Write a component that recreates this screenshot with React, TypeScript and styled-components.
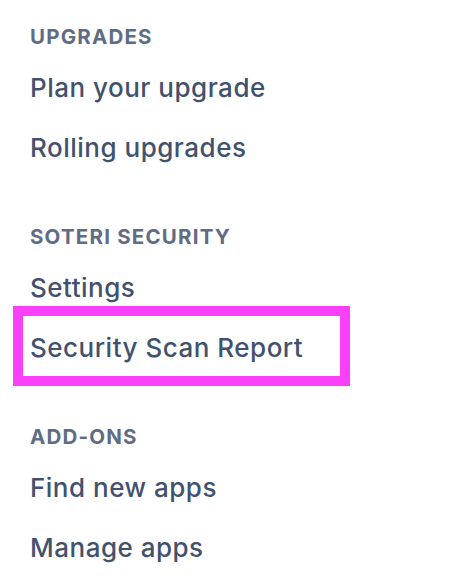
import styled, { createGlobalStyle } from "styled-components";

const GlobalStyle = createGlobalStyle`
  body {
    margin: 0;
    background: #ffffff;
    font-family: Inter, "Noto Sans", sans-serif;
  }
`;

const sections = [
  { title: "UPGRADES", items: ["Plan your upgrade", "Rolling upgrades"] },
  { title: "SOTERI SECURITY", items: ["Settings", "Security Scan Report"] },
  { title: "ADD-ONS", items: ["Find new apps", "Manage apps"] },
];

export default function App() {
  return (
    <>
      <GlobalStyle />
      <Nav>
        {sections.map((section) => (
          <Section key={section.title}>
            <Heading>{section.title}</Heading>
            <List>
              {section.items.map((item) => (
                <Item key={item} $highlighted={item === "Security Scan Report"}>
                  {item}
                </Item>
              ))}
            </List>
          </Section>
        ))}
      </Nav>
    </>
  );
}

const Nav = styled.nav`
  padding: 25px 0 0 30px;
  display: flex;
  flex-direction: column;
  gap: 47px;
`;

const Section = styled.section`
  display: flex;
  flex-direction: column;
  gap: 9px;
`;

const Heading = styled.h2`
  margin: 0;
  font-size: 20.5px;
  line-height: 24px;
  font-weight: 700;
  letter-spacing: 1.2px;
  color: #5e6c84;
`;

const List = styled.ul`
  margin: 0;
  padding: 0;
  list-style: none;
`;

const Item = styled.li<{ $highlighted?: boolean }>`
  position: relative;
  font-size: 26px;
  line-height: 60px;
  font-weight: 450;
  letter-spacing: 0.5px;
  color: #42526e;

  &::after {
    content: "";
    display: ${(p) => (p.$highlighted ? "block" : "none")};
    position: absolute;
    top: -12px;
    bottom: -8px;
    left: -17px;
    width: 337px;
    box-sizing: border-box;
    border: 10px solid #fb40fc;
  }
`;
